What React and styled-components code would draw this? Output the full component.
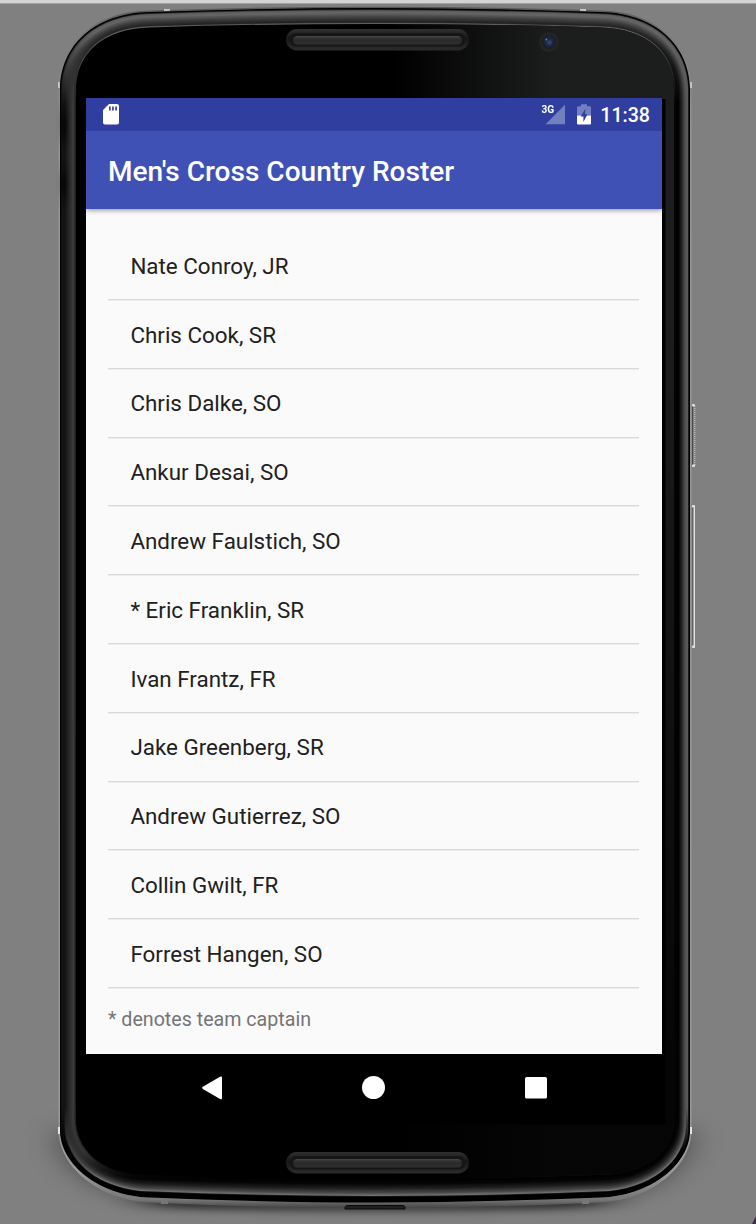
import React from 'react';
import styled, { createGlobalStyle } from 'styled-components';

const GlobalStyle = createGlobalStyle`
  * { box-sizing: border-box; }
  body { margin: 0; background: #808080; font-family: Roboto, "Liberation Sans", sans-serif; }
`;

const Page = styled.main`
  position: relative;
  width: 756px;
  height: 1224px;
  overflow: hidden;
  padding: 98px 94px 0 86px;
  background: #808080;
`;

const Casing = styled.svg`
  position: absolute;
  inset: 0;
  width: 756px;
  height: 1224px;
`;

const Screen = styled.section`
  position: relative;
  display: flex;
  flex-direction: column;
  width: 576px;
  height: 956px;
  background: #fafafa;
`;

const StatusBar = styled.div`
  display: flex;
  align-items: center;
  flex: none;
  height: 33px;
  padding: 0 12px 0 16px;
  background: #303f9f;
`;

const StatusIcon = styled.svg`
  display: block;
  flex: none;
  width: ${(p) => p.$w}px;
  height: 22px;
  margin-right: ${(p) => p.$gap || 0}px;
`;

const StatusSpacer = styled.div`
  flex: 1;
`;

const Network = styled.span`
  align-self: flex-start;
  width: 13px;
  margin: 5px -8px 0 0;
  color: #fff;
  font-size: 11.5px;
  line-height: 13px;
  font-weight: 700;
  letter-spacing: -0.2px;
  transform: scaleX(0.88);
  transform-origin: right center;
`;

const Clock = styled.time`
  color: #fff;
  font-size: 19.6px;
  line-height: 33px;
  font-weight: 500;
  padding-top: 1px;
`;

const AppBar = styled.header`
  position: relative;
  display: flex;
  align-items: center;
  flex: none;
  height: 78px;
  padding: 4px 22px 0;
  background: #3f51b5;
  box-shadow: 0 1px 5px rgba(0, 0, 0, 0.45);
  clip-path: inset(0 0 -8px 0);
`;

const Title = styled.h1`
  margin: 0;
  color: #fff;
  font-size: 28.04px;
  line-height: 36px;
  font-weight: 500;
  white-space: nowrap;
`;

const Roster = styled.ul`
  list-style: none;
  margin: 0;
  padding: 22.2px 23px 0 22px;
`;

const Athlete = styled.li`
  display: flex;
  align-items: center;
  height: 68.8px;
  padding: 1.6px 22.4px 0;
  border-bottom: 1.4px solid #d9d9d9;
  box-shadow: 0 1px 0 rgba(0, 0, 0, 0.05);
  color: #212121;
  font-size: 22.4px;
  line-height: 28px;
  white-space: nowrap;
`;

const Footnote = styled.p`
  margin: 20.4px 22px 0;
  color: #757575;
  font-size: 19.65px;
  line-height: 24px;
`;

const NavBar = styled.nav`
  position: relative;
  display: flex;
  align-items: center;
  justify-content: space-around;
  width: 576px;
  height: 67px;
  padding: 0 45px;
`;

const NavIcon = styled.svg`
  display: block;
  width: 24px;
  height: 24px;
`;

const athletes = [
  'Nate Conroy, JR',
  'Chris Cook, SR',
  'Chris Dalke, SO',
  'Ankur Desai, SO',
  'Andrew Faulstich, SO',
  '* Eric Franklin, SR',
  'Ivan Frantz, FR',
  'Jake Greenberg, SR',
  'Andrew Gutierrez, SO',
  'Collin Gwilt, FR',
  'Forrest Hangen, SO',
];

// Case outline and glass outline share one point order so rings between them can be blended.
const OUTER = [
  60, 90, 60, 45, 95, 13, 150, 12, 225, 9.5, 300, 8, 375, 8, 450, 8, 525, 9.5, 600, 12, 655, 13, 690, 45, 690, 90,
  690, 1130, 690, 1165, 650, 1196, 600, 1197.5, 525, 1200.5, 450, 1202.5, 375, 1202.5, 300, 1202.5, 225, 1200.5, 150, 1197.5, 100, 1196, 60, 1165, 60, 1130,
];
const INNER = [
  75.5, 90, 75.5, 54, 102, 28, 150, 27, 225, 24.5, 300, 23.5, 375, 23.5, 450, 23.5, 525, 24.5, 600, 27, 648, 28, 674.5, 54, 674.5, 90,
  674.5, 1118, 674.5, 1150, 650, 1175, 600, 1175.5, 525, 1178.5, 450, 1179, 375, 1179, 300, 1179, 225, 1178.5, 150, 1175.5, 100, 1175, 75.5, 1150, 75.5, 1118,
];

const outline = (n) => {
  const c = (i) => n.slice(i, i + 6).join(' ');
  return `M${n[0]} ${n[1]}C${c(2)}C${c(8)}C${c(14)}C${c(20)}L${n[26]} ${n[27]}C${c(28)}C${c(34)}C${c(40)}C${c(46)}Z`;
};
const blend = (t) => OUTER.map((v, i) => v + (INNER[i] - v) * t);

const shade = (stops, t) => {
  let k = 1;
  while (k < stops.length - 1 && stops[k][0] < t) k += 1;
  const [a, x] = stops[k - 1];
  const [b, y] = stops[k];
  const v = Math.round(x + ((y - x) * Math.min(b - a, Math.max(0, t - a))) / (b - a));
  return `rgb(${v},${v},${v})`;
};

const TOP = [[0, 0], [0.05, 0], [0.14, 90], [0.3, 103], [0.6, 62], [0.92, 30], [0.96, 95], [1, 95]];
const LEFT = [[0, 0], [0.1, 20], [0.3, 19], [0.6, 42], [0.88, 62], [0.94, 34], [1, 34]];
const RIGHT = [[0, 0], [0.07, 0], [0.12, 92], [0.3, 80], [0.5, 40], [0.72, 0], [1, 4]];
const BOTTOM = [[0, 0], [0.24, 0], [0.28, 115], [0.4, 70], [0.6, 28], [0.8, 4], [1, 0]];
const CORNER = [[0, 0], [0.25, 0], [0.32, 65], [0.6, 46], [0.9, 52], [1, 28]];
const RINGS = Array.from({ length: 33 }, (_, i) => i / 32);

const RingShade = ({ id, t, side, corner }) => (
  <linearGradient id={id} gradientUnits="userSpaceOnUse" x1="0" y1="8" x2="0" y2="1203">
    <stop offset="0" stopColor={shade(TOP, t)} />
    <stop offset="0.02" stopColor={shade(TOP, t)} />
    <stop offset="0.08" stopColor={shade(side, t)} />
    <stop offset="0.92" stopColor={shade(side, t)} />
    <stop offset="0.958" stopColor={shade(corner, t)} />
    <stop offset="0.979" stopColor={shade(BOTTOM, t)} />
    <stop offset="1" stopColor={shade(BOTTOM, t)} />
  </linearGradient>
);

const Speaker = ({ y }) => (
  <g>
    <rect x="286" y={y} width="183" height="21.5" rx="10.7" fill="url(#speaker)" />
    <rect x="289.5" y={y + 4} width="176" height="13.5" rx="6.7" fill="#161616" />
    <rect x="293" y={y + 7} width="169" height="8.5" rx="4.2" fill="url(#grille)" />
    <path d={`M296 ${y + 7.7}H459`} stroke="#484848" />
  </g>
);

const PhoneCasing = () => (
  <Casing viewBox="0 0 756 1224" aria-hidden="true">
    <defs>
      <filter id="soft" filterUnits="userSpaceOnUse" x="-100" y="950" width="956" height="400"><feGaussianBlur stdDeviation="21 11" /></filter>
      <filter id="tight" filterUnits="userSpaceOnUse" x="-100" y="1100" width="956" height="200"><feGaussianBlur stdDeviation="22 4" /></filter>
      <filter id="smudge" x="-200%" y="-100%" width="500%" height="300%"><feGaussianBlur stdDeviation="2 9" /></filter>
      <clipPath id="leftHalf"><rect x="0" y="0" width="375" height="1224" /></clipPath>
      <clipPath id="rightHalf"><rect x="375" y="0" width="381" height="1224" /></clipPath>
      <linearGradient id="edge" x1="0" y1="0" x2="0" y2="1">
        <stop offset="0" stopColor="#555" /><stop offset="0.02" stopColor="#777" />
        <stop offset="0.1" stopColor="#959595" /><stop offset="0.97" stopColor="#999" />
        <stop offset="0.993" stopColor="#777" /><stop offset="1" stopColor="#444" />
      </linearGradient>
      <linearGradient id="glass" x1="0" y1="0" x2="1" y2="0">
        <stop offset="0.53" stopColor="#1c1e1d" stopOpacity="0" />
        <stop offset="0.8" stopColor="#1c1e1d" /><stop offset="1" stopColor="#1c1e1d" />
      </linearGradient>
      <linearGradient id="glassFade" x1="0" y1="0" x2="0" y2="1">
        <stop offset="0.25" stopColor="#000" stopOpacity="0" />
        <stop offset="0.9" stopColor="#000" stopOpacity="0.82" />
      </linearGradient>
      <linearGradient id="speaker" x1="0" y1="0" x2="0" y2="1">
        <stop offset="0" stopColor="#303030" /><stop offset="0.45" stopColor="#171717" /><stop offset="1" stopColor="#2c2c2c" />
      </linearGradient>
      <linearGradient id="grille" x1="0" y1="0" x2="0" y2="1">
        <stop offset="0" stopColor="#3d3d3d" /><stop offset="0.5" stopColor="#292929" /><stop offset="1" stopColor="#303030" />
      </linearGradient>
      <radialGradient id="lens">
        <stop offset="0" stopColor="#263657" /><stop offset="0.7" stopColor="#1c2238" /><stop offset="1" stopColor="#1b1d22" />
      </radialGradient>
      {RINGS.map((t, i) => (
        <React.Fragment key={t}>
          <RingShade id={`l${i}`} t={t} side={LEFT} corner={CORNER} />
          <RingShade id={`r${i}`} t={t} side={RIGHT} corner={BOTTOM} />
        </React.Fragment>
      ))}
    </defs>
    <rect width="756" height="3" fill="#d4d4d4" />
    <rect y="3" width="756" height="1" fill="#a3a3a3" />
    <path d="M66 1130C74 1176 110 1194 180 1198H570C640 1194 676 1176 684 1130Z" fill="#000" opacity="0.65" filter="url(#soft)" />
    <path d="M150 1196Q375 1214 600 1196V1206Q375 1214 150 1206Z" fill="#000" opacity="0.75" filter="url(#tight)" />
    <path
      d="M58.5 90C58.5 44 94 11 150 10.5Q262 6.7 375 6.7T600 10.5C656 11 691.5 44 691.5 90V1130C691.5 1167 651 1200 600 1202.5Q487 1208 375 1208T150 1202.5C99 1200 58.5 1167 58.5 1130Z"
      fill="url(#edge)"
    />
    <g clipPath="url(#leftHalf)">{RINGS.map((t, i) => <path key={t} d={outline(blend(t))} fill={`url(#l${i})`} />)}</g>
    <g clipPath="url(#rightHalf)">{RINGS.map((t, i) => <path key={t} d={outline(blend(t))} fill={`url(#r${i})`} />)}</g>
    <g filter="url(#smudge)" fill="#000" opacity="0.8">
      <rect x="61" y="112" width="6" height="26" />
      <rect x="61" y="172" width="6" height="24" />
    </g>
    <path d={outline(blend(1.03))} fill="#000" />
    <path d={outline(blend(1.03))} fill="url(#glass)" />
    <path d={outline(blend(1.03))} fill="url(#glassFade)" />
    <rect x="86" y="99" width="579.5" height="1025.5" fill="#000" />
    <Speaker y={29} />
    <Speaker y={1152} />
    <circle cx="549" cy="42" r="10" fill="#232424" />
    <circle cx="549" cy="42" r="7.2" fill="url(#lens)" />
    <circle cx="546.3" cy="39.5" r="0.9" fill="#6685ad" />
    <circle cx="549.5" cy="42.5" r="2.3" fill="#354668" opacity="0.8" />
    <g fill="#c9c9c9">
      <path d="M164 9h6v1.7l-6 .3zM580 9h6v2l-6-.3z" />
      <rect x="58" y="82" width="1.8" height="6" /><rect x="690.2" y="82" width="1.8" height="6" />
      <rect x="58" y="1127" width="2" height="7" fill="#e5e5e5" /><rect x="690" y="1127" width="2" height="7" fill="#e5e5e5" />
    </g>
    <path d="M161 1199h7v5h-7zM582 1199h7v5h-7z" fill="#777" />
    <path d="M345 1209v-1.5q0-2 3-2h54q3 0 3 2v1.5z" fill="#202020" stroke="#080808" />
    <path d="M692.5 405V466" stroke="#4d4d4d" /><path d="M694.8 406V465" stroke="#d5d5d5" strokeDasharray="1 1" />
    <path d="M692.5 507V646" stroke="#646464" /><path d="M694.3 507V646" stroke="#eee" strokeWidth="1.2" />
    <g fill="#e2e2e2">
      <rect x="692" y="404" width="3" height="2.5" rx="1" /><rect x="692" y="464.5" width="3" height="2.5" rx="1" />
      <rect x="692" y="505" width="3" height="2.5" rx="1" /><rect x="692" y="645.5" width="3" height="2.5" rx="1" />
    </g>
    <path d="M756 1216V1224H752Z" fill="#393044" />
  </Casing>
);

export default function App() {
  return (
    <Page>
      <GlobalStyle />
      <PhoneCasing />
      <Screen>
        <StatusBar>
          <StatusIcon $w={18} viewBox="0 0 18 22">
            <path fill="#fff" fillRule="evenodd" d="M7 0H15Q17 0 17 2V18.5Q17 20.5 15 20.5H3Q1 20.5 1 18.5V6ZM7 2.5V6.5H8.7V2.5ZM10.1 2.5V6.5H11.8V2.5ZM13.2 2.5V6.5H14.9V2.5Z" />
          </StatusIcon>
          <StatusSpacer />
          <Network>3G</Network>
          <StatusIcon $w={20} $gap={12} viewBox="0 0 20 22">
            <path d="M20 .8V20.3H.5Z" fill="#7380bf" />
          </StatusIcon>
          <StatusIcon $w={14} $gap={9.5} viewBox="0 0 14 22">
            <path d="M4 .3H10V2.2H12.7Q14 2.2 14 3.5V11.5H0V3.5Q0 2.2 1.3 2.2H4Z" fill="#7380bf" />
            <path d="M0 11.5H14V19.3Q14 20.5 12.7 20.5H1.3Q0 20.5 0 19.3Z" fill="#fff" />
            <path d="M8.4 4.7L3.7 12.5H6.4V18L10.5 10.3H8Z" fill="#303f9f" />
          </StatusIcon>
          <Clock>11:38</Clock>
        </StatusBar>
        <AppBar>
          <Title>Men's Cross Country Roster</Title>
        </AppBar>
        <Roster>
          {athletes.map((name) => <Athlete key={name}>{name}</Athlete>)}
        </Roster>
        <Footnote>* denotes team captain</Footnote>
      </Screen>
      <NavBar>
        <NavIcon viewBox="0 0 24 24"><path d="M20.5 .5Q22 0 22 1.5V22.3Q22 23.8 20.5 23.2L2.8 13Q1.2 11.9 2.8 10.8Z" fill="#fff" /></NavIcon>
        <NavIcon viewBox="0 0 24 24"><circle cx="11.5" cy="11.5" r="11.5" fill="#fff" /></NavIcon>
        <NavIcon viewBox="0 0 24 24"><rect x="1" y="1" width="22" height="21.5" rx="1.5" fill="#fff" /></NavIcon>
      </NavBar>
    </Page>
  );
}
